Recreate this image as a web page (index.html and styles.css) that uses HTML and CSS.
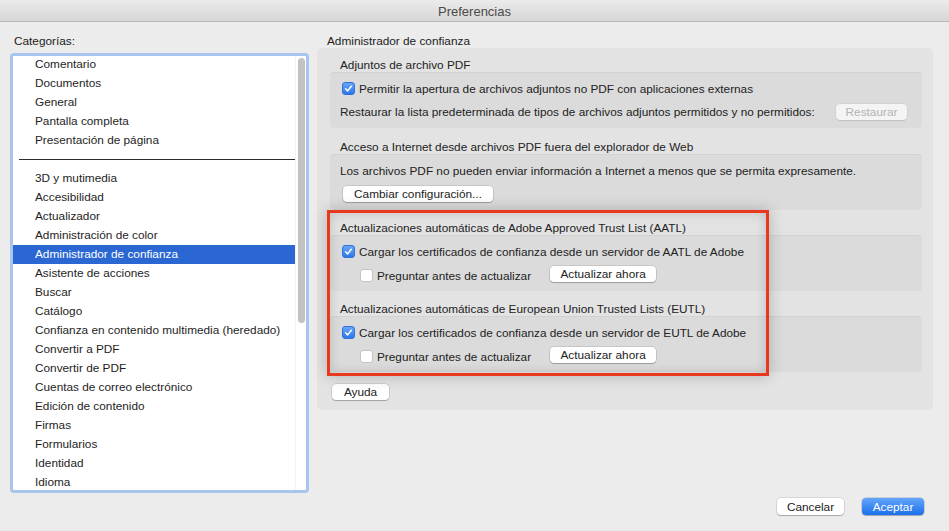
FILE: index.html
```html
<!DOCTYPE html>
<html lang="es">
<head>
<meta charset="utf-8">
<title>Preferencias</title>
<link rel="stylesheet" href="styles.css">
</head>
<body>
<div class="window">
  <div class="titlebar">Preferencias</div>
  <div class="main">
    <div class="left">
      <div class="label">Categorías:</div>
      <div class="listbox">
        <div class="list">
          <div class="item">Comentario</div>
          <div class="item">Documentos</div>
          <div class="item">General</div>
          <div class="item">Pantalla completa</div>
          <div class="item">Presentación de página</div>
          <div class="sep"></div>
          <div class="item">3D y mutimedia</div>
          <div class="item">Accesibilidad</div>
          <div class="item">Actualizador</div>
          <div class="item">Administración de color</div>
          <div class="item selected">Administrador de confianza</div>
          <div class="item">Asistente de acciones</div>
          <div class="item">Buscar</div>
          <div class="item">Catálogo</div>
          <div class="item">Confianza en contenido multimedia (heredado)</div>
          <div class="item">Convertir a PDF</div>
          <div class="item">Convertir de PDF</div>
          <div class="item">Cuentas de correo electrónico</div>
          <div class="item">Edición de contenido</div>
          <div class="item">Firmas</div>
          <div class="item">Formularios</div>
          <div class="item">Identidad</div>
          <div class="item">Idioma</div>
        </div>
        <div class="scrolltrack"><div class="thumb"></div></div>
      </div>
    </div>
    <div class="right">
      <div class="pane-title">Administrador de confianza</div>
      <div class="group">
        <div class="section">
          <div class="sec-title">Adjuntos de archivo PDF</div>
          <div class="box">
            <div class="row"><span class="cb checked"><svg viewBox="0 0 14 14"><path d="M3.3 7.4 L5.9 10 L10.6 4.2"/></svg></span>Permitir la apertura de archivos adjuntos no PDF con aplicaciones externas</div>
            <div class="row">Restaurar la lista predeterminada de tipos de archivos adjuntos permitidos y no permitidos:<span class="btn disabled push">Restaurar</span></div>
          </div>
        </div>
        <div class="section">
          <div class="sec-title">Acceso a Internet desde archivos PDF fuera del explorador de Web</div>
          <div class="box">
            <div class="row">Los archivos PDF no pueden enviar información a Internet a menos que se permita expresamente.</div>
            <div class="row"><span class="btn wide">Cambiar configuración...</span></div>
          </div>
        </div>
        <div class="section tight">
          <div class="sec-title">Actualizaciones automáticas de Adobe Approved Trust List (AATL)</div>
          <div class="box">
            <div class="row"><span class="cb checked"><svg viewBox="0 0 14 14"><path d="M3.3 7.4 L5.9 10 L10.6 4.2"/></svg></span>Cargar los certificados de confianza desde un servidor de AATL de Adobe</div>
            <div class="row indent"><span class="cb"></span><span class="cb-text">Preguntar antes de actualizar</span><span class="btn upd">Actualizar ahora</span></div>
          </div>
        </div>
        <div class="section tight">
          <div class="sec-title">Actualizaciones automáticas de European Union Trusted Lists (EUTL)</div>
          <div class="box">
            <div class="row"><span class="cb checked"><svg viewBox="0 0 14 14"><path d="M3.3 7.4 L5.9 10 L10.6 4.2"/></svg></span>Cargar los certificados de confianza desde un servidor de EUTL de Adobe</div>
            <div class="row indent"><span class="cb"></span><span class="cb-text">Preguntar antes de actualizar</span><span class="btn upd">Actualizar ahora</span></div>
          </div>
        </div>
        <div class="help-row"><span class="btn help">Ayuda</span></div>
      </div>
    </div>
  </div>
  <div class="footer">
    <span class="btn cancel">Cancelar</span>
    <span class="btn primary">Aceptar</span>
  </div>
  <div class="highlight"></div>
</div>
</body>
</html>
```
FILE: styles.css
```css
* { box-sizing: border-box; }
html, body { margin: 0; padding: 0; }
body {
  font-family: "Liberation Sans", Arial, sans-serif;
  font-size: 11.8px;
  color: #222;
  background: #ececec;
}
.window {
  position: relative;
  width: 949px;
  height: 531px;
  background: #ececec;
  overflow: hidden;
}
.titlebar {
  height: 22px;
  line-height: 23px;
  text-align: center;
  color: #4a4a4a;
  font-size: 13px;
  background: linear-gradient(#ebebeb, #d6d6d6);
  border-bottom: 1px solid #b8b8b8;
}
.main {
  display: flex;
  align-items: flex-start;
  padding-top: 12px;
}
.left {
  margin-left: 10px;
  width: 299px;
}
.label {
  height: 15px;
  line-height: 15px;
  padding-left: 4px;
}
.listbox {
  margin-top: 4px;
  height: 440px;
  border: 3px solid #a8c5ee;
  border-radius: 4px;
  background: #fff;
  display: flex;
  overflow: hidden;
}
.list {
  flex: 1;
  min-width: 0;
  overflow: hidden;
  margin-top: -1px;
}
.item {
  height: 19px;
  line-height: 19px;
  padding-left: 22px;
  white-space: nowrap;
  color: #1e1e1e;
}
.item.selected {
  background: #2a67d3;
  color: #fff;
}
.sep {
  height: 1px;
  background: #2c2c2c;
  margin: 9px 0 9px 6px;
}
.scrolltrack {
  width: 11px;
  flex: none;
  border-left: 1px solid #f3f3f3;
  padding: 2px 0 0 2px;
}
.thumb {
  width: 7px;
  height: 265px;
  border-radius: 4px;
  background: #c2c2c2;
}
.right {
  margin-left: 8px;
  width: 616px;
}
.pane-title {
  height: 14px;
  line-height: 15px;
  padding-left: 10px;
}
.group {
  background: #e3e3e3;
  border-radius: 5px;
  padding: 9px 11px 10px 13px;
}
.section + .section { margin-top: 11px; }
.section.tight { margin-top: 10px; }
.sec-title {
  height: 15px;
  line-height: 16px;
  padding-left: 10px;
}
.box {
  background: #dbdbdb;
  border-top: 1px solid #d2d2d2;
  border-radius: 4px;
  padding: 4px 15px 5px 10px;
}
.row {
  height: 23px;
  display: flex;
  align-items: center;
  white-space: nowrap;
}
.row.indent { padding-left: 18px; }
.cb {
  width: 13px;
  height: 13px;
  border-radius: 3px;
  background: #fff;
  border: 1px solid #c4c4c4;
  margin: 0 4px 0 2px;
  flex: none;
  display: inline-flex;
}
.row.indent .cb { position: relative; top: 1px; }
.cb.checked {
  background: linear-gradient(#68a6fa, #2e78e8);
  border-color: #2f72d9;
}
.cb svg { width: 11px; height: 11px; }
.cb svg path {
  fill: none;
  stroke: #fff;
  stroke-width: 1.9;
  stroke-linecap: round;
  stroke-linejoin: round;
}
.cb-text { margin-right: 19px; position: relative; top: 1px; }
.btn {
  display: inline-flex;
  align-items: center;
  justify-content: center;
  height: 16px;
  background: #fff;
  border-radius: 4px;
  box-shadow: 0 0 0 0.5px rgba(0,0,0,0.18), 0 1px 1px rgba(0,0,0,0.22);
  color: #222;
  font-size: 11.8px;
  flex: none;
}
.btn.disabled { background: #f4f4f4; color: #b3b3b3; box-shadow: 0 0 0 0.5px rgba(0,0,0,0.08), 0 1px 1px rgba(0,0,0,0.08); }
.push { margin-left: auto; width: 71px; }
.wide { width: 150px; margin-left: 3px; margin-top: 1px; }
.upd { width: 106px; margin-top: -2px; }
.help-row { margin-top: 12px; height: 16px; }
.help { width: 57px; margin-left: 2px; }
.footer {
  display: flex;
  justify-content: flex-end;
  gap: 18px;
  padding-right: 25px;
  margin-top: 5px;
}
.cancel { width: 67px; height: 17px; }
.primary {
  width: 62px;
  height: 17px;
  background: linear-gradient(#64a5fb, #1b70ea);
  color: #fff;
  box-shadow: 0 0 0 0.5px rgba(0,40,120,0.3), 0 1px 1px rgba(0,0,0,0.2);
}
.highlight {
  position: absolute;
  left: 327px;
  top: 210px;
  width: 442px;
  height: 166px;
  border: 3px solid #e8381d;
  box-shadow: 0 0 14px rgba(0,0,0,0.22), inset 0 0 12px rgba(0,0,0,0.16);
  pointer-events: none;
}
```
